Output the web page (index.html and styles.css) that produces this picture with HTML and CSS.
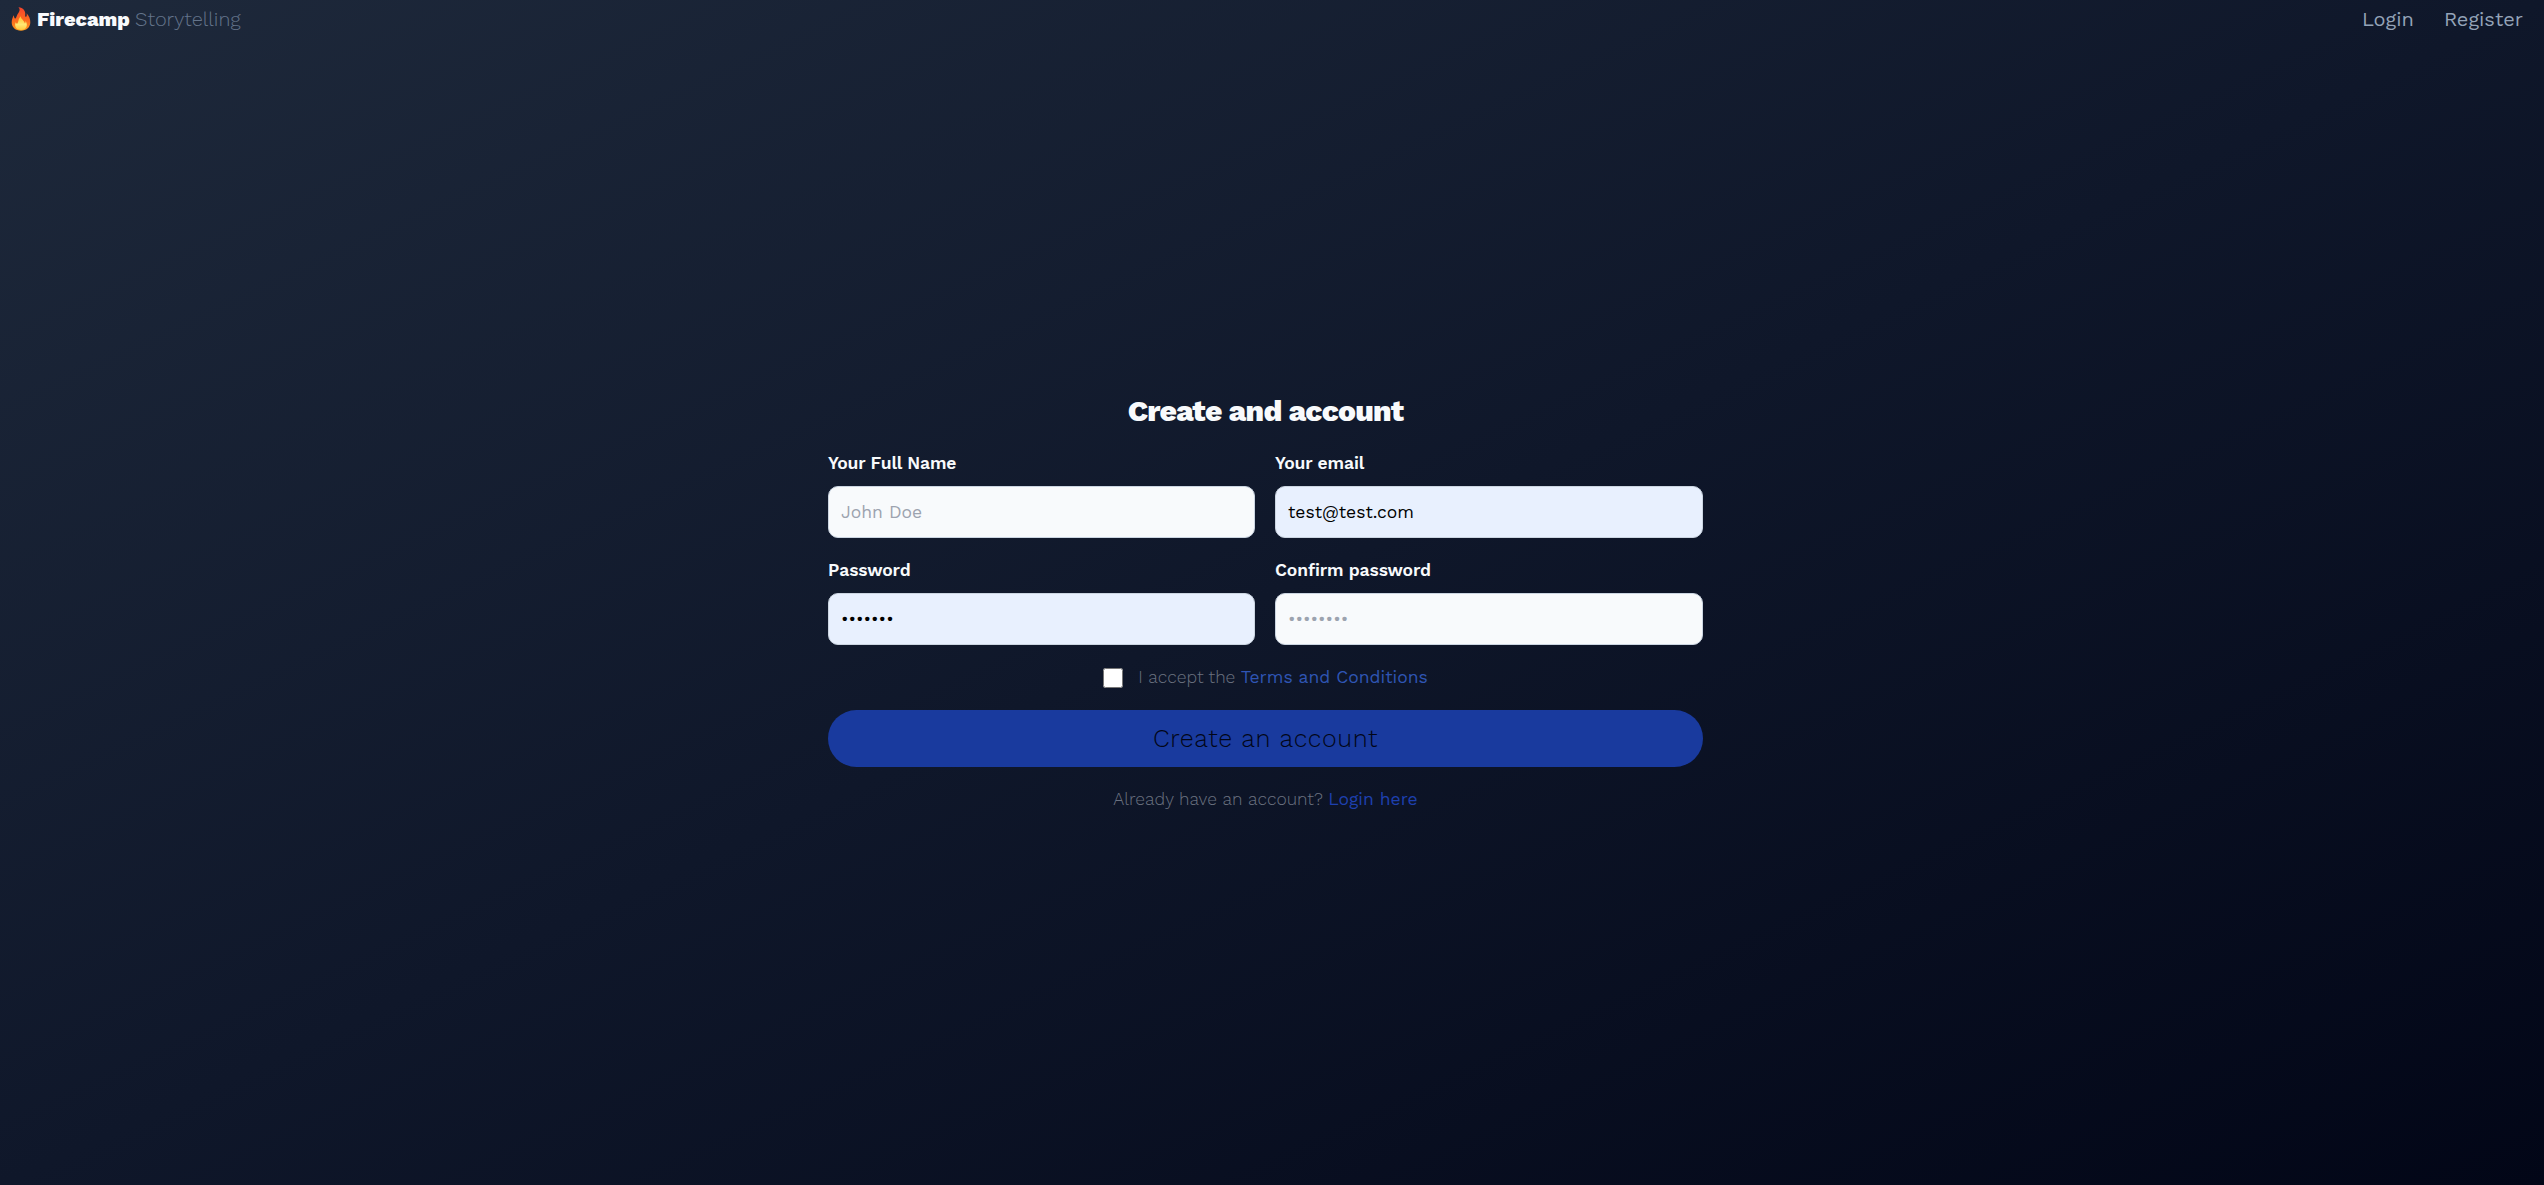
FILE: index.html
```
<!DOCTYPE html>
<html lang="en">
<head>
  <meta charset="UTF-8">
  <title>Firecamp Storytelling</title>
  <link rel="stylesheet" href="styles.css">
</head>
<body>
  <nav class="navbar">
    <a class="brand" href="#">
      <svg class="flame" viewBox="0 0 20 24">
        <defs>
          <linearGradient id="outer" x1="0" y1="0" x2="0" y2="1">
            <stop offset="0" stop-color="#f4432c" />
            <stop offset="0.55" stop-color="#fb6a1e" />
            <stop offset="1" stop-color="#ff9a1f" />
          </linearGradient>
          <linearGradient id="inner" x1="0" y1="0" x2="0" y2="1">
            <stop offset="0" stop-color="#ffc02e" />
            <stop offset="0.6" stop-color="#ffe873" />
            <stop offset="1" stop-color="#ffc93c" />
          </linearGradient>
        </defs>
        <path fill="url(#outer)" d="M7.4 0.3C12.2 0.6 14.9 4.2 14.2 8C14 9.5 14.5 10.2 15.2 9.7C16 9.1 15.9 7.5 15.5 6.3C18 8.6 19.5 12 19.3 15.8C19 20.7 15.3 23.7 10 23.7C4.6 23.7 0.9 20.5 0.7 15.8C0.6 12.5 2 10 2.6 8.2C3.3 9.3 3.1 11.3 4 11.5C5.4 11.6 5.3 9.7 6.2 8C7.4 5.8 10.2 3 7.4 0.3Z" />
        <path fill="url(#inner)" d="M9.7 9.3C9.8 12 13.5 13.8 13.7 16.3C14.6 15.9 14.7 14.6 14.5 13.7C17.5 18.2 15.3 23 10.2 23C5.4 23 3 19.7 4.7 15.3C5.1 16.3 5.5 16.8 6.4 16.6C7.8 14.7 7.2 11.7 9.7 9.3Z" />
      </svg>
      <span class="brand-name">Firecamp</span>
      <span class="brand-sub">Storytelling</span>
    </a>
    <div class="nav-links">
      <a href="#">Login</a>
      <a href="#">Register</a>
    </div>
  </nav>

  <main class="register">
    <h1>Create and account</h1>
    <form>
      <div class="fields">
        <div class="field">
          <label for="name">Your Full Name</label>
          <input type="text" id="name" placeholder="John Doe" />
        </div>
        <div class="field">
          <label for="email">Your email</label>
          <input type="email" id="email" class="filled" value="test@test.com" />
        </div>
        <div class="field">
          <label for="password">Password</label>
          <input type="password" id="password" class="filled" value="testing" />
        </div>
        <div class="field">
          <label for="confirm">Confirm password</label>
          <input type="password" id="confirm" placeholder="••••••••" />
        </div>
      </div>

      <div class="terms">
        <input type="checkbox" id="terms" />
        <label for="terms">I accept the <a class="terms-link" href="#">Terms and Conditions</a></label>
      </div>

      <button class="btn" type="submit">Create an account</button>

      <p class="login">Already have an account? <a class="login-link" href="#">Login here</a></p>
    </form>
  </main>
</body>
</html>
```

FILE: styles.css
```
* {
  box-sizing: border-box;
}
body {
  margin: 0;
  height: 1185px;
  overflow: hidden;
  display: flex;
  flex-direction: column;
  font-family: "Work Sans", Inter, sans-serif;
  color: #f8fafc;
  background: linear-gradient(to bottom right, #1e293b, #0f172a, #020617);
}
a {
  text-decoration: none;
}
.navbar {
  display: flex;
  justify-content: space-between;
  height: 40px;
  padding: 0 21px 0 11px;
  font-size: 20px;
  line-height: 39px;
}
.brand {
  display: flex;
}
.flame {
  width: 20px;
  height: 24px;
  margin: 7px 6px 0 0;
}
.brand-name {
  width: 98px;
  font-weight: 800;
  color: #f8fafc;
}
.brand-sub {
  font-weight: 300;
  color: #64748b;
}
.nav-links {
  display: flex;
  gap: 30px;
}
.nav-links a {
  color: #94a3b8;
}
.register {
  width: 875px;
  margin: 351px 0 0 828px;
}
h1 {
  margin: 0 0 22px;
  text-align: center;
  font-size: 30px;
  font-weight: 800;
  line-height: 40px;
  letter-spacing: -0.025em;
}
.fields {
  display: grid;
  grid-template-columns: 427px 428px;
  gap: 22px 20px;
}
.field label {
  display: block;
  height: 33px;
  line-height: 20px;
  font-size: 17.5px;
  font-weight: 600;
  letter-spacing: -0.1px;
}
.field input {
  display: block;
  width: 100%;
  height: 52px;
  padding: 0 12px;
  border: 1px solid #cbd5e1;
  border-radius: 10px;
  background: #f8fafc;
  color: #000;
  font-family: inherit;
  font-size: 17.5px;
  font-weight: 400;
}
.field input.filled {
  background: #e8f0fe;
}
.field input::placeholder {
  color: #9ca3af;
}
.terms {
  display: flex;
  align-items: center;
  justify-content: center;
  height: 26px;
  margin-top: 20px;
  font-size: 17.5px;
  font-weight: 300;
  line-height: 24px;
  color: #6b7280;
}
.terms label {
  padding-bottom: 2px;
}
.terms input {
  width: 20px;
  height: 20px;
  margin: 0 15px 0 0;
}
.terms-link {
  font-weight: 400;
  color: #2f55b4;
}
.btn {
  display: block;
  width: 100%;
  height: 57px;
  margin-top: 19px;
  padding: 0;
  border: none;
  border-radius: 29px;
  background: #193a9e;
  color: #020617;
  font-family: inherit;
  font-size: 25px;
  font-weight: 300;
  letter-spacing: 0.025em;
}
.login {
  margin: 20px 0 0;
  text-align: center;
  font-size: 17.5px;
  font-weight: 300;
  line-height: 24px;
  color: #6b7280;
}
.login-link {
  font-weight: 400;
  color: #1e40af;
}
```
